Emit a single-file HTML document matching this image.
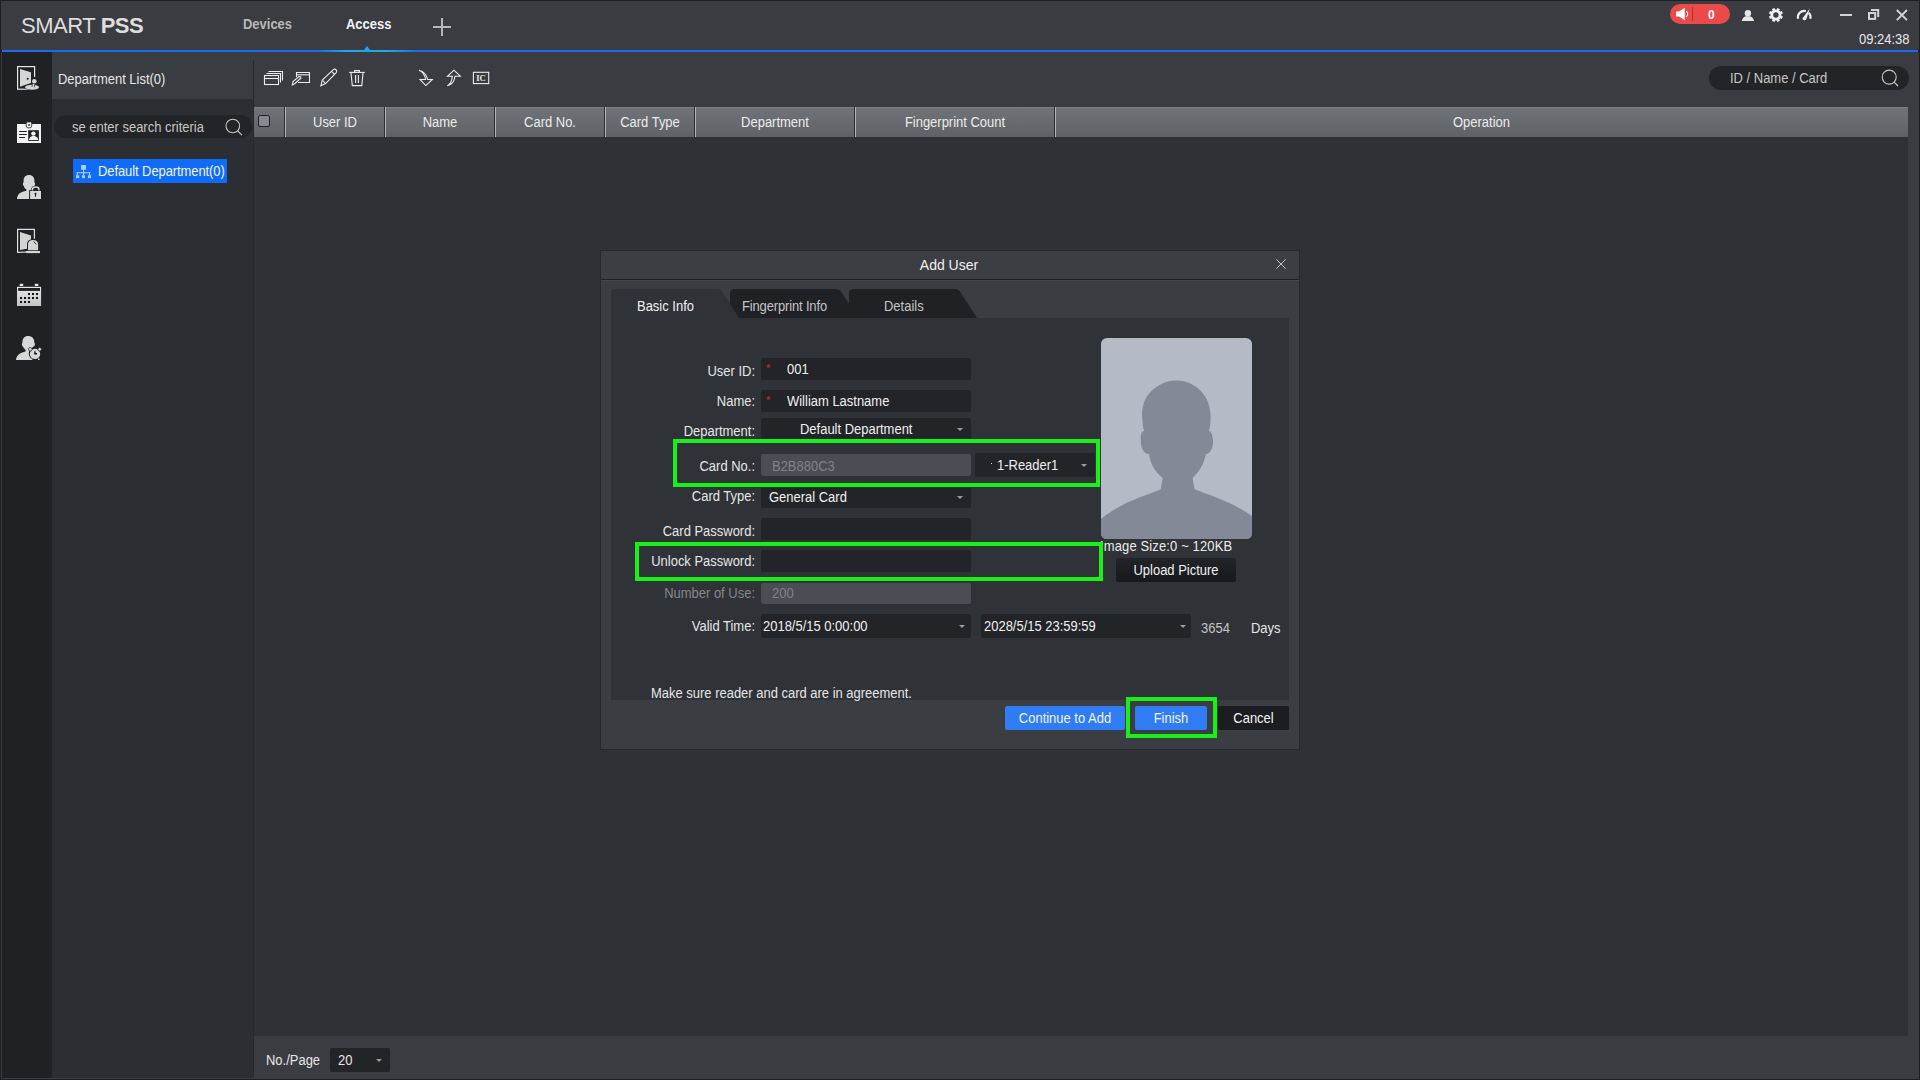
<!DOCTYPE html>
<html><head><meta charset="utf-8">
<style>
*{margin:0;padding:0;box-sizing:border-box}
html,body{width:1920px;height:1080px;overflow:hidden;background:#1d1f23;font-family:"Liberation Sans",sans-serif;font-size:13px;color:#e8e8e8}
.a{position:absolute}
.t{position:absolute;white-space:nowrap;line-height:15px;font-size:13.8px;transform:scaleX(0.94);transform-origin:0 50%}
.fld{position:absolute;background:#222428;border-radius:2px}
.dis{position:absolute;background:#4a4d54;border-radius:2px}
.arr{position:absolute;width:0;height:0;border-left:3px solid transparent;border-right:3px solid transparent;border-top:3px solid #9a9ca0}
.green{position:absolute;border:4px solid #18f018}
.lbl{position:absolute;white-space:nowrap;line-height:15px;font-size:13px;text-align:right;right:1165px;color:#e6e6e6}
svg{position:absolute;overflow:visible}
</style></head><body>

<!-- title bar -->
<div class="a" style="left:1px;top:1px;width:1918px;height:49px;background:#3a3c42"></div>
<div class="a" style="left:2px;top:50px;width:1916px;height:2px;background:#1b6bee"></div>
<div class="a" style="left:317px;top:50px;width:100px;height:2px;background:linear-gradient(90deg,#1b6bee,#20a8ec 30%,#20a8ec 70%,#1b6bee)"></div>
<div class="a" style="left:364px;top:46px;width:0;height:0;border-left:3.5px solid transparent;border-right:3.5px solid transparent;border-bottom:4px solid #20a8ec"></div>

<div class="t" style="left:21px;top:13px;font-size:22px;line-height:25px;letter-spacing:-0.45px;color:#dedede;transform:none">SMART <b>PSS</b></div>
<div class="t" style="left:243px;top:17px;font-weight:bold;color:#b8b8b8">Devices</div>
<div class="t" style="left:346px;top:17px;font-weight:bold;color:#f2f2f2">Access</div>
<div class="a" style="left:433px;top:26px;width:18px;height:2px;background:#b8b8b8"></div>
<div class="a" style="left:441px;top:18px;width:2px;height:18px;background:#b8b8b8"></div>

<!-- below title -->
<div class="a" style="left:1px;top:52px;width:1918px;height:1027px;background:#3a3c42"></div>
<!-- left sidebar -->
<div class="a" style="left:2px;top:52px;width:50px;height:1026px;background:#1f2125"></div>
<!-- dept panel -->
<div class="a" style="left:52px;top:60px;width:201px;height:39px;background:#393c41"></div>
<div class="a" style="left:52px;top:99px;width:201px;height:979px;background:#2b2e33"></div>
<div class="a" style="left:253px;top:60px;width:1px;height:1018px;background:#26282c"></div>
<div class="t" style="left:58px;top:72px;color:#e6e6e6">Department List(0)</div>
<div class="a" style="left:54px;top:115px;width:198px;height:23px;border-radius:12px;background:#222428"></div>
<div class="t" style="left:72px;top:120px;color:#c8c6c4">se enter search criteria</div>
<div class="a" style="left:73px;top:159px;width:154px;height:24px;background:#106cf8"></div>
<div class="t" style="left:98px;top:164px;letter-spacing:-0.08px;color:#f4f4f4">Default Department(0)</div>

<!-- main -->
<div class="a" style="left:254px;top:60px;width:1654px;height:47px;background:#3a3c42"></div>
<div class="a" style="left:254px;top:107px;width:1654px;height:30px;background:linear-gradient(#707378,#5e6166)"></div>
<div class="a" style="left:254px;top:137px;width:1654px;height:899px;background:#2e3136"></div>
<div class="a" style="left:254px;top:1036px;width:1664px;height:42px;background:#3a3c42"></div>

<!-- bottom pager -->
<div class="t" style="left:266px;top:1053px;color:#e6e6e6">No./Page</div>
<div class="a" style="left:330px;top:1048px;width:60px;height:24px;background:#222428;border-radius:2px"></div>
<div class="t" style="left:338px;top:1053px;color:#e6e6e6">20</div>
<div class="arr" style="left:376px;top:1059px"></div>

<!-- dialog -->
<div class="a" style="left:600px;top:250px;width:700px;height:500px;background:#26282c"></div>
<div class="a" style="left:601px;top:251px;width:698px;height:28px;background:#3b3e43"></div>
<div class="a" style="left:601px;top:279px;width:698px;height:1px;background:#1e2024"></div>
<div class="a" style="left:601px;top:280px;width:698px;height:469px;background:#3a3d42"></div>
<div class="a" style="left:601px;top:280px;width:698px;height:1px;background:#45484d"></div>
<div class="t" style="left:0;top:257px;width:1898px;text-align:center;font-size:14px;line-height:16px;color:#f0f0f0;transform:none">Add User</div>

<!-- content panel -->
<div class="a" style="left:611px;top:318px;width:678px;height:382px;background:#2f3237"></div>


<!-- table header -->
<div class="a" style="left:254px;top:107px;width:1654px;height:1px;background:#7d8085"></div>
<div class="a" style="left:258px;top:115px;width:12px;height:12px;border:1px solid #1e2024;border-radius:2px;background:#878a92"></div>
<div class="a" style="left:284px;top:107px;width:1px;height:30px;background:#2b2e33"></div><div class="a" style="left:285px;top:107px;width:1px;height:30px;background:#b0b3b8"></div>
<div class="a" style="left:384px;top:107px;width:1px;height:30px;background:#2b2e33"></div><div class="a" style="left:385px;top:107px;width:1px;height:30px;background:#b0b3b8"></div>
<div class="a" style="left:494px;top:107px;width:1px;height:30px;background:#2b2e33"></div><div class="a" style="left:495px;top:107px;width:1px;height:30px;background:#b0b3b8"></div>
<div class="a" style="left:604px;top:107px;width:1px;height:30px;background:#2b2e33"></div><div class="a" style="left:605px;top:107px;width:1px;height:30px;background:#b0b3b8"></div>
<div class="a" style="left:694px;top:107px;width:1px;height:30px;background:#2b2e33"></div><div class="a" style="left:695px;top:107px;width:1px;height:30px;background:#b0b3b8"></div>
<div class="a" style="left:854px;top:107px;width:1px;height:30px;background:#2b2e33"></div><div class="a" style="left:855px;top:107px;width:1px;height:30px;background:#b0b3b8"></div>
<div class="a" style="left:1054px;top:107px;width:1px;height:30px;background:#2b2e33"></div><div class="a" style="left:1055px;top:107px;width:1px;height:30px;background:#b0b3b8"></div>
<div class="t" style="left:285px;width:100px;top:115px;text-align:center;color:#ececec;transform-origin:50% 50%">User ID</div>
<div class="t" style="left:385px;width:110px;top:115px;text-align:center;color:#ececec;transform-origin:50% 50%">Name</div>
<div class="t" style="left:495px;width:110px;top:115px;text-align:center;color:#ececec;transform-origin:50% 50%">Card No.</div>
<div class="t" style="left:605px;width:90px;top:115px;text-align:center;color:#ececec;transform-origin:50% 50%">Card Type</div>
<div class="t" style="left:695px;width:160px;top:115px;text-align:center;color:#ececec;transform-origin:50% 50%">Department</div>
<div class="t" style="left:855px;width:200px;top:115px;text-align:center;color:#ececec;transform-origin:50% 50%">Fingerprint Count</div>
<div class="t" style="left:1055px;width:853px;top:115px;text-align:center;color:#ececec;transform-origin:50% 50%">Operation</div>

<!-- right search -->
<div class="a" style="left:1709px;top:66px;width:200px;height:24px;border-radius:12px;background:#222428"></div>
<div class="t" style="left:1730px;top:71px;color:#c8c6c4">ID / Name / Card</div>
<div class="t" style="left:1859px;top:32px;color:#e8e8e8">09:24:38</div>

<!-- red pill -->
<div class="a" style="left:1670px;top:4px;width:60px;height:20px;border-radius:10px;background:#ea4a4a"></div>
<div class="a" style="left:1692px;top:7px;width:1px;height:14px;background:#b03030"></div>
<div class="t" style="left:1708px;top:8px;font-size:12px;font-weight:bold;color:#fff;transform:none">0</div>

<!-- dialog tabs -->
<svg style="left:0;top:0" width="1920" height="1080">
 <path d="M849 318 L849 293 Q849 289 853 289 L955 289 Q959 289 961 293 L977 318 Z" fill="#1f2125"/>
 <path d="M730 318 L730 293 Q730 289 734 289 L836 289 Q840 289 842 293 L858 318 Z" fill="#1f2125"/>
 <path d="M611 318 L611 293 Q611 289 615 289 L717 289 Q721 289 723 293 L739 318 Z" fill="#2f3237"/>
</svg>
<div class="t" style="left:637px;top:299px;color:#f0f0f0">Basic Info</div>
<div class="t" style="left:742px;top:299px;letter-spacing:-0.15px;color:#c4c4c4">Fingerprint Info</div>
<div class="t" style="left:884px;top:299px;color:#c4c4c4">Details</div>
<div class="a" style="left:1276px;top:259px;width:10px;height:10px"><svg width="10" height="10" style="left:0;top:0"><path d="M0.3 0.3L9.7 9.7M9.7 0.3L0.3 9.7" stroke="#c4c4c4" stroke-width="1"/></svg></div>
<div class="t" style="left:555px;width:200px;text-align:right;top:364px;color:#e6e6e6;transform-origin:100% 50%">User ID:</div>
<div class="t" style="left:555px;width:200px;text-align:right;top:394px;color:#e6e6e6;transform-origin:100% 50%">Name:</div>
<div class="t" style="left:555px;width:200px;text-align:right;top:424px;color:#e6e6e6;transform-origin:100% 50%">Department:</div>
<div class="t" style="left:555px;width:200px;text-align:right;top:459px;color:#e6e6e6;transform-origin:100% 50%">Card No.:</div>
<div class="t" style="left:555px;width:200px;text-align:right;top:489px;color:#e6e6e6;transform-origin:100% 50%">Card Type:</div>
<div class="t" style="left:555px;width:200px;text-align:right;top:524px;color:#e6e6e6;transform-origin:100% 50%">Card Password:</div>
<div class="t" style="left:555px;width:200px;text-align:right;top:554px;color:#e6e6e6;transform-origin:100% 50%">Unlock Password:</div>
<div class="t" style="left:555px;width:200px;text-align:right;top:586px;color:#85878c;transform-origin:100% 50%">Number of Use:</div>
<div class="t" style="left:555px;width:200px;text-align:right;top:619px;color:#e6e6e6;transform-origin:100% 50%">Valid Time:</div>

<div class="fld" style="left:761px;top:358px;width:210px;height:22px"></div>
<div class="t" style="left:766px;top:361px;color:#e0202a;font-size:11px;transform:none">*</div>
<div class="t" style="left:787px;top:362px;color:#f0f0f0">001</div>
<div class="fld" style="left:761px;top:390px;width:210px;height:22px"></div>
<div class="t" style="left:766px;top:393px;color:#e0202a;font-size:11px;transform:none">*</div>
<div class="t" style="left:787px;top:394px;color:#f0f0f0">William Lastname</div>
<div class="fld" style="left:761px;top:418px;width:210px;height:21px"></div>
<div class="t" style="left:800px;top:422px;color:#f0f0f0">Default Department</div>
<div class="arr" style="left:957px;top:428px"></div>
<div class="dis" style="left:761px;top:454px;width:210px;height:22px"></div>
<div class="t" style="left:772px;top:459px;color:#7f8288">B2B880C3</div>
<div class="fld" style="left:975px;top:453px;width:120px;height:24px"></div>
<div class="a" style="left:991px;top:463px;width:1px;height:1px;background:#ddd"></div>
<div class="t" style="left:997px;top:458px;color:#f0f0f0">1-Reader1</div>
<div class="arr" style="left:1081px;top:464px"></div>
<div class="fld" style="left:761px;top:488px;width:210px;height:20px"></div>
<div class="t" style="left:769px;top:490px;color:#f0f0f0">General Card</div>
<div class="arr" style="left:957px;top:496px"></div>
<div class="fld" style="left:761px;top:518px;width:210px;height:22px"></div>
<div class="fld" style="left:761px;top:550px;width:210px;height:22px"></div>
<div class="dis" style="left:761px;top:583px;width:210px;height:21px"></div>
<div class="t" style="left:772px;top:586px;color:#7f8288">200</div>
<div class="fld" style="left:761px;top:614px;width:210px;height:24px"></div>
<div class="t" style="left:763px;top:619px;color:#f0f0f0">2018/5/15 0:00:00</div>
<div class="arr" style="left:959px;top:625px"></div>
<div class="fld" style="left:981px;top:614px;width:210px;height:24px"></div>
<div class="t" style="left:984px;top:619px;color:#f0f0f0">2028/5/15 23:59:59</div>
<div class="arr" style="left:1180px;top:625px"></div>
<div class="t" style="left:1201px;top:621px;color:#c4c4c4">3654</div>
<div class="t" style="left:1251px;top:621px;color:#e6e6e6">Days</div>
<div class="t" style="left:651px;top:686px;color:#e6e6e6">Make sure reader and card are in agreement.</div>

<!-- photo -->
<svg style="left:1101px;top:338px" width="151" height="201">
 <rect x="0" y="0" width="151" height="201" rx="6" fill="#b4bac6"/>
</svg>
<div class="t" style="left:1100px;top:539px;letter-spacing:0.15px;color:#ececec">Image Size:0 ~ 120KB</div>
<div class="a" style="left:1116px;top:558px;width:120px;height:24px;border-radius:2px;background:linear-gradient(#222428,#16181b)"></div>
<div class="t" style="left:1116px;width:120px;text-align:center;top:563px;color:#f0f0f0;transform-origin:50% 50%">Upload Picture</div>

<!-- buttons -->
<div class="a" style="left:1005px;top:706px;width:120px;height:24px;border-radius:2px;background:#2f7cf4"></div>
<div class="t" style="left:1005px;width:120px;text-align:center;top:711px;color:#f4f4f4;transform-origin:50% 50%">Continue to Add</div>
<div class="a" style="left:1135px;top:706px;width:72px;height:24px;border-radius:2px;background:#2f7cf4"></div>
<div class="t" style="left:1135px;width:72px;text-align:center;top:711px;color:#f4f4f4;transform-origin:50% 50%">Finish</div>
<div class="a" style="left:1218px;top:706px;width:71px;height:24px;border-radius:2px;background:#1b1d21"></div>
<div class="t" style="left:1218px;width:71px;text-align:center;top:711px;color:#f4f4f4;transform-origin:50% 50%">Cancel</div>

<!-- green boxes -->
<div class="green" style="left:673px;top:439px;width:427px;height:48px"></div>
<div class="green" style="left:635px;top:542px;width:468px;height:39px"></div>
<div class="green" style="left:1126px;top:697px;width:91px;height:41px"></div>


<!-- ICONS overlay -->
<svg style="left:0;top:0" width="1920" height="1080">
 <!-- photo silhouette -->
 <g transform="translate(1101,338)">
  <path d="M59.7 151.3 C45 158 22 163 0 181 L0 195 Q0 201 6 201 L145 201 Q151 201 151 195 L151 178 C133 165 108 157 93.5 151.3 L91.6 140 C99 133 103 125 105 116 C109 116 112 110 112 104 C112 97 110 93 108 93 C111 80 110 66 103 57 C97 48 87 42.5 75 42.5 C64 42.5 54 48 47 57 C40 66 40 80 43 93 C40 93 39.5 98 39.8 104 C40 110 43 116 48 116 C49 124 53 133 61.7 140 Z" fill="#838996"/>
 </g>
 <!-- search icons -->
 <circle cx="232.8" cy="126" r="6.8" fill="none" stroke="#c8c8c8" stroke-width="1.1"/>
 <path d="M237.6 130.8 L242 135.2" stroke="#c8c8c8" stroke-width="1.2"/>
 <circle cx="1889.2" cy="77.1" r="7" fill="none" stroke="#c8c8c8" stroke-width="1.1"/>
 <path d="M1894.2 82.1 L1898 86" stroke="#c8c8c8" stroke-width="1.2"/>
 <!-- tree icon -->
 <g fill="#a8d0fc">
  <rect x="81" y="165" width="5" height="4.7" rx="0.5"/>
  <rect x="83" y="169.5" width="1" height="3"/>
  <rect x="76.7" y="172.2" width="13.5" height="1.1"/>
  <rect x="76.7" y="172.2" width="1.1" height="3"/>
  <rect x="83" y="172.2" width="1" height="3"/>
  <rect x="89" y="172.2" width="1.1" height="3"/>
  <rect x="76" y="175.2" width="3.2" height="2.9"/>
  <rect x="82" y="175.2" width="3" height="2.9"/>
  <rect x="88" y="175.2" width="3.1" height="2.9"/>
 </g>
 <!-- top right: speaker -->
 <path d="M1676 11.5 L1679 11.5 L1684.8 7.8 L1684.8 20.2 L1679 16.6 L1676 16.6 Z" fill="#fff"/>
 <path d="M1686.3 11 Q1689 14 1686.3 17" fill="none" stroke="#fff" stroke-width="1.1"/>
 <!-- user -->
 <g fill="#e6e6e6">
  <circle cx="1747.9" cy="13.2" r="3.2"/>
  <path d="M1745.6 16.3 L1750.2 16.3 Q1753.6 17.8 1754 20.9 L1741.8 20.9 Q1742.2 17.8 1745.6 16.3 Z"/>
 </g>
 <!-- gear -->
 <g transform="translate(1775.9,15)" fill="#eeeeee">
  <circle r="4.1" fill="none" stroke="#eeeeee" stroke-width="2.8"/>
  <rect x="-1.4" y="-7" width="2.8" height="3.2" transform="rotate(22.5)"/><rect x="-1.4" y="-7" width="2.8" height="3.2" transform="rotate(67.5)"/><rect x="-1.4" y="-7" width="2.8" height="3.2" transform="rotate(112.5)"/><rect x="-1.4" y="-7" width="2.8" height="3.2" transform="rotate(157.5)"/><rect x="-1.4" y="-7" width="2.8" height="3.2" transform="rotate(202.5)"/><rect x="-1.4" y="-7" width="2.8" height="3.2" transform="rotate(247.5)"/><rect x="-1.4" y="-7" width="2.8" height="3.2" transform="rotate(292.5)"/><rect x="-1.4" y="-7" width="2.8" height="3.2" transform="rotate(337.5)"/>
 </g>
 <!-- speedometer -->
 <path d="M1798.1 18.8 A6.3 6.3 0 0 1 1805.8 11.1" fill="none" stroke="#eeeeee" stroke-width="2.2"/>
 <path d="M1808.65 12.75 A6.3 6.3 0 0 1 1810.3 18.8" fill="none" stroke="#eeeeee" stroke-width="2.2"/>
 <path d="M1802.4 18.6 Q1802.8 20.5 1804.6 20.3 Q1806.4 20.1 1806.6 18.4 L1809.8 8.6 Z" fill="#eeeeee"/>
 <!-- window buttons -->
 <rect x="1840" y="14" width="12" height="2" fill="#d4d4d4"/>
 <path d="M1871 9.9 L1878.2 9.9 L1878.2 17" fill="none" stroke="#d4d4d4" stroke-width="2"/>
 <rect x="1869" y="13" width="6.2" height="5.9" fill="none" stroke="#d4d4d4" stroke-width="2"/>
 <path d="M1896.8 10 L1907 20.2 M1907 10 L1896.8 20.2" stroke="#d4d4d4" stroke-width="1.9"/>

 <!-- sidebar icon 1: door + joystick -->
 <g>
  <rect x="17.6" y="66.6" width="17" height="22.6" fill="none" stroke="#e8e8e8" stroke-width="1.2"/>
  <rect x="33" y="77" width="4" height="4" fill="#1f2125"/>
  <path d="M20 69 L31 72.3 L31 83 L20 86.7 Z" fill="#d6d6d6"/>
  <circle cx="27.7" cy="78.7" r="1" fill="#1f2125"/>
  <ellipse cx="32" cy="87.2" rx="7.8" ry="3" fill="#1f2125"/>
  <ellipse cx="32" cy="87.2" rx="7" ry="2.5" fill="#d6d6d6"/>
  <path d="M34 82 L33 87" stroke="#1f2125" stroke-width="3"/>
  <path d="M34 82 L33 87" stroke="#d6d6d6" stroke-width="1.6"/>
  <circle cx="34.3" cy="81.2" r="2.8" fill="#1f2125"/>
  <circle cx="34.3" cy="81.2" r="2.3" fill="#d6d6d6"/>
 </g>
 <!-- sidebar icon 2: ID card -->
 <g>
  <rect x="17" y="124" width="24" height="19" fill="#f2f2f2"/>
  <path d="M26.2 122 L31.7 122 L31.7 126 Q31.7 128 29 128 Q26.2 128 26.2 126 Z" fill="#f2f2f2" stroke="#1f2125" stroke-width="0.8"/>
  <rect x="28.3" y="124.2" width="1.6" height="1.6" fill="#1f2125"/>
  <rect x="19.1" y="131" width="7.7" height="1" fill="#1f2125"/>
  <rect x="19.1" y="134" width="7.7" height="1" fill="#1f2125"/>
  <rect x="19.1" y="137" width="5.8" height="1" fill="#1f2125"/>
  <rect x="28.2" y="130.2" width="10.7" height="10.7" fill="#1f2125"/>
  <circle cx="33.4" cy="133.6" r="2.2" fill="#f2f2f2"/>
  <path d="M32 136 L34.8 136 Q38 137 38.5 140 L28.8 140 Q29.2 137 32 136 Z" fill="#f2f2f2"/>
 </g>
 <!-- sidebar icon 3: person + lock -->
 <g fill="#d8d8d8">
  <path d="M29 175 C25.5 175 23.6 177.2 23.6 180.8 L23.6 182.6 C22.6 183 22.5 185.2 23.8 185.9 C24.3 187.6 25.3 188.8 26.4 189.6 L26.4 190.8 C21 191.6 17.2 194 17 199 L41 199 L41 190.8 L31.8 190.8 C32.8 189.2 33.8 187.6 34.3 185.9 C35.5 185.2 35.4 183 34.4 182.6 L34.4 180.8 C34.4 177.2 32.5 175 29 175 Z"/>
  <path d="M29.6 199.5 L29.6 190.4 L41.6 190.4" fill="none" stroke="#1f2125" stroke-width="1"/>
  <path d="M32.4 190.6 L32.4 189.6 Q32.4 187 35.7 187 Q39 187 39 189.6 L39 190.6" fill="none" stroke="#1f2125" stroke-width="2.6"/>
  <path d="M32.4 190.6 L32.4 189.6 Q32.4 187 35.7 187 Q39 187 39 189.6 L39 190.6" fill="none" stroke="#d8d8d8" stroke-width="1.4"/>
  <circle cx="35.5" cy="193.8" r="1.1" fill="#1f2125"/>
  <rect x="35" y="194" width="1" height="2.8" fill="#1f2125"/>
 </g>
 <!-- sidebar icon 4: door + bell -->
 <g>
  <path d="M28 252 L17.6 252.4 L17.6 229.3 L34.4 229.3 L34.4 238.8" fill="none" stroke="#e0e0e0" stroke-width="1.2"/>
  <path d="M20 232 L31 235.5 L31 248 L20 250 Z" fill="#d4d4d4"/>
  <path d="M27 250.6 L27 244 Q27 239.2 33 239.2 Q39 239.2 39 244 L39 250.6 Z" fill="#1f2125"/>
  <path d="M28 250.3 L28 244.5 Q28 239.9 33 239.9 Q38.1 239.9 38.1 244.5 L38.1 250.3 Z" fill="#d4d4d4"/>
  <path d="M33.6 241.5 L36.3 244.4" stroke="#1f2125" stroke-width="0.9"/>
  <rect x="25.9" y="251" width="14.1" height="2.1" fill="#d8d8d8"/>
 </g>
 <!-- sidebar icon 5: calendar -->
 <g>
  <defs><linearGradient id="cg" x1="0" y1="0" x2="0" y2="1"><stop offset="0" stop-color="#e8e8e8"/><stop offset="1" stop-color="#c4c4c4"/></linearGradient></defs>
  <rect x="17" y="286.8" width="24.1" height="19.2" fill="url(#cg)"/>
  <rect x="18.2" y="288" width="21.8" height="2.9" fill="#1f2125"/>
  <rect x="19.7" y="283.8" width="3.5" height="2.2" fill="#e8e8e8"/>
  <rect x="34.8" y="283.8" width="3.5" height="2.2" fill="#e8e8e8"/>
  <g fill="#111">
   <rect x="28" y="293" width="2" height="2"/><rect x="32" y="293" width="2" height="2"/><rect x="36" y="293" width="2" height="2"/>
   <rect x="20" y="297" width="2" height="2"/><rect x="24" y="297" width="2" height="2"/><rect x="28" y="297" width="2" height="2"/><rect x="32" y="297" width="2" height="2"/><rect x="36" y="297" width="2" height="2"/>
   <rect x="20" y="301" width="2" height="2"/><rect x="24" y="301" width="2" height="2"/><rect x="28" y="301" width="2" height="2"/>
  </g>
 </g>
 <!-- sidebar icon 6: person + clock -->
 <g fill="#d8d8d8">
  <path d="M28 336 C24.5 336 22.3 338.5 22.5 342.5 C21.5 343.5 21.7 346 23 346.5 C23.5 348 24.5 349 25.5 349.6 L25.5 351.5 C21 352.5 16.5 354.5 16 360 L31 360 L31 349 C32 347.5 33.5 346.5 34.3 346 C35.2 345 35 343.5 34.3 342.5 C34.5 338.5 32 336 28 336 Z"/>
  <circle cx="35" cy="353.9" r="6.2" fill="#1f2125"/>
  <circle cx="35" cy="353.9" r="5.2"/>
  <circle cx="30.3" cy="349.3" r="1.8" stroke="#1f2125" stroke-width="0.7"/>
  <circle cx="39.7" cy="349.3" r="1.8" stroke="#1f2125" stroke-width="0.7"/>
  <rect x="30.8" y="358.5" width="1.5" height="1.5"/>
  <rect x="38" y="358.5" width="1.5" height="1.5"/>
  <path d="M34.2 351.2 L35.6 351.2 L35.6 353 L37 353 L37 354.4 L34.2 354.4 Z" fill="#111"/>
 </g>

 <!-- toolbar icons -->
 <g fill="none" stroke="#ececec" stroke-width="1.1">
  <rect x="264.5" y="75.5" width="14" height="9"/>
  <path d="M264.5 78.5 L278.5 78.5"/>
  <path d="M266.5 73.5 L280.5 73.5 L280.5 82.5"/>
  <path d="M268.5 71.5 L282.5 71.5 L282.5 80.5"/>
  <!-- card + pen -->
  <path d="M298 82.5 L309.5 82.5 L309.5 72.5 L296.5 72.5 L296.5 77"/>
  <path d="M296.5 74.8 L309.5 74.8"/>
  <path d="M292.3 85 L293 81.5 L299 76.5 Q300.7 76.2 301 78 L295 83.5 Z"/>
  <!-- pencil -->
  <path d="M320.8 85.8 L322.3 80 L333.3 69.6 Q335 68.6 336.2 69.9 Q337.2 71.2 336.2 72.6 L325.6 83.6 Z"/>
  <path d="M322.3 80 L325.6 83.6"/>
  <path d="M331.6 71.3 L334.6 74.4"/>
  <!-- trash -->
  <path d="M349.2 72.4 L364.8 72.4"/>
  <path d="M354.6 72.4 L354.6 70.6 L359.4 70.6 L359.4 72.4"/>
  <path d="M351 73 L352.3 85.6 L361.8 85.6 L363 73"/>
  <path d="M355.6 75 L355.6 83 M358.4 75 L358.4 83"/>
  <!-- import -->
  <path d="M419 70.2 Q424.5 72.5 425.6 79.5 L420 79.5 L425.8 85.6 L432.3 79.5 L427.6 79.5 Q426 72 419 70.2 Z"/>
  <!-- export -->
  <path d="M447.3 85.8 Q451.5 84 452.4 76.3 L447.5 76.3 L453.9 70.2 L460.4 76.3 L455 76.3 Q454 84.5 447.3 85.8 Z"/>
  <!-- IC -->
  <rect x="473.4" y="72.3" width="15.3" height="11.3"/>
 </g>
 <text x="476.3" y="81.3" font-family="Liberation Serif" font-weight="bold" font-size="8.5" fill="#ececec">IC</text>
</svg>

</body></html>
